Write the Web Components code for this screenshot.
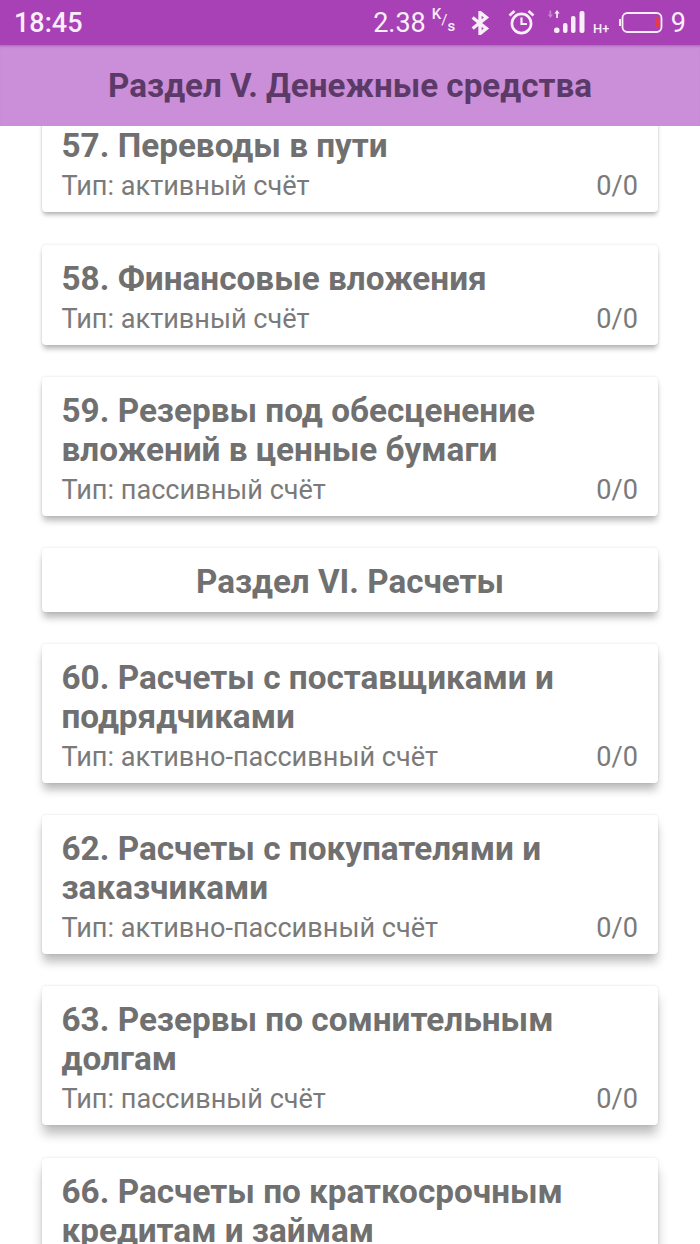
<!DOCTYPE html>
<html lang="ru">
<head>
<meta charset="utf-8">
<title>Раздел V. Денежные средства</title>
<style>
html, body { margin: 0; padding: 0; height: 100%; background: #fff; font-family: Roboto, "Liberation Sans", sans-serif; }
body { display: flex; flex-direction: column; height: 1244px; overflow: hidden; }
</style>
</head>
<body>
<status-bar></status-bar>
<app-header>Раздел V. Денежные средства</app-header>
<account-list>
	<account-card style="--lift:4px" type="активный счёт" count="0/0">57. Переводы в пути</account-card>
	<account-card style="--lift:5px" type="активный счёт" count="0/0">58. Финансовые вложения</account-card>
	<account-card style="--lift:6px" type="пассивный счёт" count="0/0">59. Резервы под обесценение вложений в ценные бумаги</account-card>
	<section-card style="--lift:7px">Раздел VI. Расчеты</section-card>
	<account-card style="--lift:8px" type="активно-пассивный счёт" count="0/0">60. Расчеты с поставщиками и подрядчиками</account-card>
	<account-card style="--lift:9px" type="активно-пассивный счёт" count="0/0">62. Расчеты с покупателями и заказчиками</account-card>
	<account-card style="--lift:10px" type="пассивный счёт" count="0/0">63. Резервы по сомнительным долгам</account-card>
	<account-card style="--lift:11px" type="пассивный счёт" count="0/0">66. Расчеты по краткосрочным кредитам и займам</account-card>
</account-list>
<script>
// top system bar with clock and indicators
class StatusBar extends HTMLElement {
	constructor() {
		super();
		this.attachShadow({mode:'open'}).innerHTML = `
		<style>
			:host { display: flex; align-items: center; height: 45px; flex: none; background: #a841b5; color: #f9eefa; padding: 0 14px; box-sizing: border-box; font-size: 27px; position: relative; z-index: 3; }
			.time { flex: 1; font-weight: 500; }
			.right { display: flex; align-items: center; }
			.unit { display: flex; width: 23px; margin-left: 6px; font-size: 15px; font-weight: 500; line-height: 15px; }
			.unit span:nth-child(1) { margin-top: -5px; }
			.unit span:nth-child(2) { margin-top: 1px; font-weight: 400; }
			.unit span:nth-child(3) { margin-top: 7px; }
			svg { display: block; }
			.bt { margin-left: 15px; }
			.alarm { margin-left: 18px; margin-top: -1px; }
			.sig { margin-left: 12px; margin-top: -2px; margin-bottom: -6px; }
			.bat { margin-left: 10px; }
			.nine { margin-left: 8px; }
		</style>
		<span class="time">18:45</span>
		<div class="right">
			<span>2.38</span>
			<div class="unit"><span>K</span><span>/</span><span>s</span></div>
			<svg class="bt" width="20" height="24" viewBox="0 0 20 26" fill="none" stroke="#f9eefa" stroke-width="3.6">
				<path d="M2 7 L17 19 L10 24.5 V1.5 L17 7 L2 19"/>
			</svg>
			<svg class="alarm" width="27" height="26" viewBox="0 0 27 26" fill="none" stroke="#f9eefa">
				<circle cx="13.5" cy="14.5" r="9.6" stroke-width="2.6"/>
				<path d="M13.5 8.5 V15 H19" stroke-width="2.2"/>
				<path d="M1.5 6.5 L6.5 2 M25.5 6.5 L20.5 2" stroke-width="2.8"/>
			</svg>
			<svg class="sig" width="62" height="30" viewBox="0 0 62 30" fill="#f9eefa">
				<path d="M2.5 4.5 V0.5 H4.2 V4.5 H6 L3.4 8 L0.8 4.5 Z" opacity=".4"/>
				<path d="M9.2 3.5 V8 H10.9 V3.5 H12.7 L10 0 L7.4 3.5 Z"/>
				<rect x="7" y="17.5" width="5.5" height="5.5" rx="2.5"/>
				<rect x="16" y="13" width="4.5" height="10" rx="2"/>
				<rect x="24" y="6" width="4.5" height="17" rx="2"/>
				<rect x="32.5" y="1" width="5" height="22" rx="2"/>
				<text x="46" y="23" font-family="Roboto, sans-serif" font-size="13" font-weight="500">H+</text>
			</svg>
			<svg class="bat" width="44" height="21" viewBox="0 0 44 21" fill="none">
				<path d="M1 7 V14" stroke="#f9eefa" stroke-width="2"/>
				<rect x="3.5" y="1" width="39" height="19" rx="5" stroke="#f9eefa" stroke-width="1.8"/>
				<rect x="36" y="5" width="5" height="11" fill="#e53a4e"/>
			</svg>
			<span class="nine">9</span>
		</div>`;
	}
}
customElements.define('status-bar', StatusBar);

// toolbar with the section title
class AppHeader extends HTMLElement {
	constructor() {
		super();
		this.attachShadow({mode:'open'}).innerHTML = `
		<style>
			:host { display: flex; align-items: center; justify-content: center; height: 81px; flex: none; background: #cb8fd9; color: #5c3a68; font-size: 33.2px; font-weight: 700; position: relative; z-index: 2; box-shadow: inset 0 3px 3px -2px rgba(90,30,100,.35); }
		</style>
		<slot></slot>`;
	}
}
customElements.define('app-header', AppHeader);

// scrolled list, first card is cut by the header
class AccountList extends HTMLElement {
	constructor() {
		super();
		this.attachShadow({mode:'open'}).innerHTML = `
		<style>
			:host { display: block; flex: 1; min-height: 0; overflow: hidden; }
			.inner { display: flex; flex-direction: column; gap: 32.2px; margin-top: -13.7px; padding: 0 42px; }
		</style>
		<div class="inner"><slot></slot></div>`;
	}
}
customElements.define('account-list', AccountList);

class AccountCard extends HTMLElement {
	constructor() {
		super();
		this.attachShadow({mode:'open'}).innerHTML = `
		<style>
			:host { display: block; background: #fff; border-radius: 4px; padding: 14px 20px 10px 19.5px; color: #707070; box-shadow: 0 0 3px rgba(0,0,0,.12), 0 var(--lift) calc(var(--lift) * 1.1) -1px rgba(0,0,0,.26); flex: none; }
			.title { font-size: 33.3px; font-weight: 700; line-height: 39px; }
			.row { display: flex; justify-content: space-between; font-size: 27.1px; line-height: 32px; margin-top: 5px; color: #7a7a7a; }
		</style>
		<div class="title"><slot></slot></div>
		<div class="row"><span class="type"></span><span class="count"></span></div>`;
	}
	connectedCallback() {
		this.shadowRoot.querySelector('.type').textContent = 'Тип: ' + this.getAttribute('type');
		this.shadowRoot.querySelector('.count').textContent = this.getAttribute('count');
	}
}
customElements.define('account-card', AccountCard);

class SectionCard extends HTMLElement {
	constructor() {
		super();
		this.attachShadow({mode:'open'}).innerHTML = `
		<style>
			:host { display: flex; align-items: center; justify-content: center; box-sizing: border-box; height: 64px; padding-top: 4px; background: #fff; border-radius: 4px; color: #707070; font-size: 33.2px; font-weight: 700; box-shadow: 0 0 3px rgba(0,0,0,.12), 0 var(--lift) calc(var(--lift) * 1.1) -1px rgba(0,0,0,.26); flex: none; }
		</style>
		<slot></slot>`;
	}
}
customElements.define('section-card', SectionCard);
</script>
</body>
</html>
